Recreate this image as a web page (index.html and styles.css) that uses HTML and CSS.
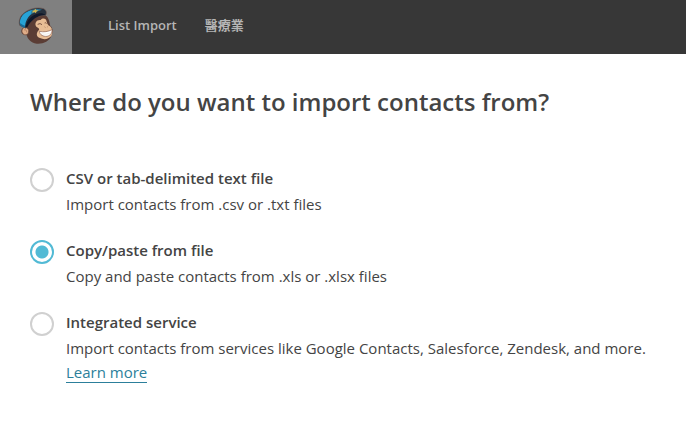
FILE: index.html
```
<!DOCTYPE html>
<html lang="en">
<head>
    <meta charset="UTF-8">
    <meta name="viewport" content="width=device-width, initial-scale=1.0">
    <title>List Import</title>
    <link rel="stylesheet" href="styles.css">
</head>
<body>

    <header class="topbar">
        <a href="#" class="logo" aria-label="Home">
            <svg width="52" height="52" viewBox="0 0 156 156" aria-hidden="true">
                <!-- head -->
                <path d="M54 66 C58 48 84 40 106 46 C118 54 118 68 121 78 C130 84 129 98 124 108 C118 124 98 133 80 131 C62 129 52 116 49 103 C38 108 31 97 36 87 C39 81 46 80 50 84 Z" fill="#5b3d35"/>
                <!-- ear -->
                <path d="M51 84 C43 78 35 86 36 95 C38 105 48 107 54 101 C57 95 57 88 51 84 Z" fill="#dfad88" stroke="#6b4536" stroke-width="2"/>
                <path d="M42 90 C46 87 51 91 50 97" fill="none" stroke="#a87458" stroke-width="2"/>
                <!-- face -->
                <path d="M79 80 C72 70 80 58 92 60 C98 53 109 55 110 65 C112 72 114 75 120 79 C128 86 129 98 124 108 C116 118 101 120 90 114 C78 111 78 99 86 91 C90 87 86 84 79 80 Z" fill="#e8bd95"/>
                <path d="M83 73 Q91 68 96 74 M104 69 Q107 66 109 71" fill="none" stroke="#7c5443" stroke-width="3"/>
                <path d="M103 80 L107 83 M111 80 L114 81" stroke="#b27e60" stroke-width="2"/>
                <!-- smile -->
                <path d="M88 94 C101 97 115 95 126 89 C127 99 121 107 111 109 C99 110 90 105 88 94 Z" fill="#fff" stroke="#8d5f4e" stroke-width="2"/>
                <path d="M90 101 Q108 106 124 98" fill="none" stroke="#d9cabf" stroke-width="1"/>
                <!-- cap -->
                <path d="M29 76 C25 65 30 47 42 39 C56 27 80 20 101 26 C111 31 111 41 106 47 C84 43 61 57 48 85 Z" fill="#26303d" stroke="#6b5752" stroke-width="2"/>
                <path d="M30 73 C28 59 35 46 45 39 C52 34 60 31 68 29 L66 41 C54 49 46 63 45 81 C39 80 34 77 30 73 Z" fill="#27a3d6"/>
                <path d="M31 69 C35 74 40 76 45 77 L45 83 C38 82 33 79 30 74 Z" fill="#176b98"/>
                <path d="M65 30 C75 26 87 26 96 29 C85 34 74 36 63 43 Z" fill="#2a7797"/>
                <path d="M47 80 C51 59 66 44 84 41 C92 38 101 40 106 45 C83 45 64 59 51 83 Z" fill="#10182a"/>
                <path d="M66 33 L73 31 L76 26 L79 31 L86 31 L79 35 L78 40 L73 36 L66 39 L69 35 Z" fill="#d7b64c"/>
            </svg>
        </a>
        <nav class="crumbs">
            <a href="#">List Import</a>
            <a href="#">醫療業</a>
        </nav>
    </header>

    <main class="content">
        <h1>Where do you want to import contacts from?</h1>

        <form class="options">
            <div class="option">
                <input type="radio" name="source" id="csv" aria-describedby="csv-help">
                <div class="option-text">
                    <label for="csv">CSV or tab-delimited text file</label>
                    <p id="csv-help">Import contacts from .csv or .txt files</p>
                </div>
            </div>

            <div class="option">
                <input type="radio" name="source" id="paste" aria-describedby="paste-help" checked>
                <div class="option-text">
                    <label for="paste">Copy/paste from file</label>
                    <p id="paste-help">Copy and paste contacts from .xls or .xlsx files</p>
                </div>
            </div>

            <div class="option">
                <input type="radio" name="source" id="service" aria-describedby="service-help">
                <div class="option-text">
                    <label for="service">Integrated service</label>
                    <p id="service-help">Import contacts from services like Google Contacts, Salesforce, Zendesk, and more. <a href="#">Learn more</a></p>
                </div>
            </div>
        </form>
    </main>

</body>
</html>
```
FILE: styles.css
```
* {
    box-sizing: border-box;
}
body {
    margin: 0;
    background-color: #fff;
    color: #444;
    font-family: "Open Sans", "Noto Sans CJK TC", sans-serif;
    font-size: 15px;
    line-height: 24px;
}
.topbar {
    display: flex;
    min-height: 54px;
    background-color: #373737;
}
.logo {
    display: flex;
    justify-content: center;
    width: 72px;
    background-color: #808080;
}
.crumbs {
    display: flex;
    align-items: center;
    gap: 28px;
    padding: 0 36px 4px;
}
.crumbs a {
    color: #b5b5b5;
    font-size: 13px;
    font-weight: 600;
    text-decoration: none;
}
.content {
    padding: 30px;
}
h1 {
    margin: 0 0 46px;
    font-size: 24px;
    font-weight: 600;
    line-height: 36px;
}
.options {
    display: flex;
    flex-direction: column;
    gap: 22px;
}
.option {
    display: flex;
    gap: 12px;
}
.option input {
    appearance: none;
    flex: none;
    width: 24px;
    height: 24px;
    margin: 2px 0 0;
    border: 2px solid #d0d0d0;
    border-radius: 50%;
    background-color: #fff;
}
.option input:checked {
    border-color: #52bad5;
    background-image: radial-gradient(circle, #52bad5 6px, transparent 7px);
}
.option label {
    display: block;
    font-weight: 600;
}
.option p {
    margin: 2px 0 0;
}
.option p a {
    border-bottom: 1px solid #2c7f9b;
    color: #2c7f9b;
    text-decoration: none;
}
```
